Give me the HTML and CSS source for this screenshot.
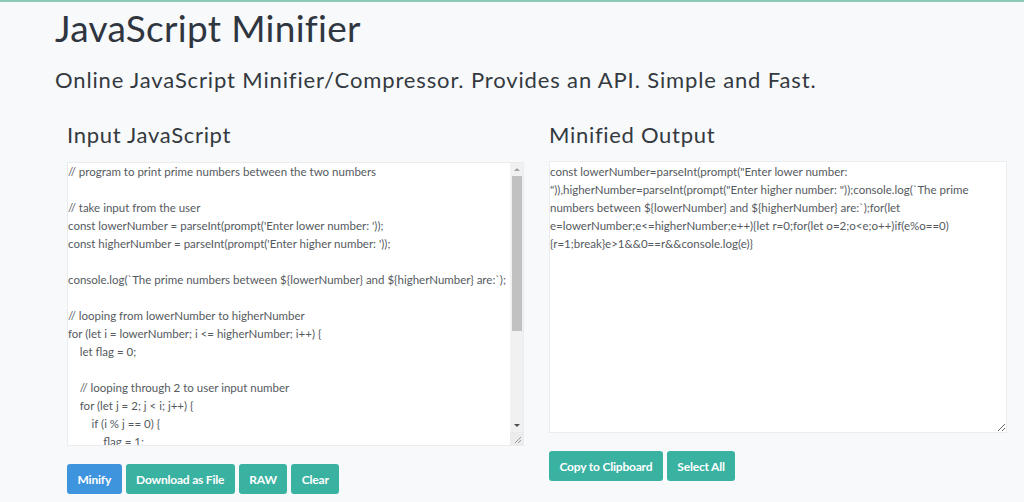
FILE: index.html
```html
<!DOCTYPE html>
<html lang="en">
<head>
<meta charset="utf-8">
<title>JavaScript Minifier</title>
<link rel="stylesheet" href="styles.css">
</head>
<body>
<div class="page">
  <h1 class="title">JavaScript Minifier</h1>
  <p class="subtitle">Online JavaScript Minifier/Compressor. Provides an API. Simple and Fast.</p>
  <div class="row">
    <div class="col col-input">
      <h2 class="col-title">Input JavaScript</h2>
      <div class="editor">
        <textarea class="code code-input" spellcheck="false">// program to print prime numbers between the two numbers

// take input from the user
const lowerNumber = parseInt(prompt('Enter lower number: '));
const higherNumber = parseInt(prompt('Enter higher number: '));

console.log(`The prime numbers between ${lowerNumber} and ${higherNumber} are:`);

// looping from lowerNumber to higherNumber
for (let i = lowerNumber; i &lt;= higherNumber; i++) {
    let flag = 0;

    // looping through 2 to user input number
    for (let j = 2; j &lt; i; j++) {
        if (i % j == 0) {
            flag = 1;
            break;
        }
    }

    if (i &gt; 1 &amp;&amp; flag == 0) {
        console.log(i);
    }
}</textarea>
        <div class="scrollbar" aria-hidden="true">
          <div class="sb-btn"><span class="arrow-up"></span></div>
          <div class="sb-track"><div class="sb-thumb"></div></div>
          <div class="sb-btn"><span class="arrow-down"></span></div>
          <div class="sb-corner">
            <svg width="13" height="13" viewBox="0 0 13 13"><path d="M11 5 L5 11 M11 8 L8 11" stroke="#9a9a9a" stroke-width="1" fill="none"/></svg>
          </div>
        </div>
      </div>
      <div class="actions">
        <button class="btn btn-blue">Minify</button>
        <button class="btn btn-teal">Download as File</button>
        <button class="btn btn-teal">RAW</button>
        <button class="btn btn-teal">Clear</button>
      </div>
    </div>
    <div class="col col-output">
      <h2 class="col-title">Minified Output</h2>
      <textarea class="code code-output" wrap="off" spellcheck="false">const lowerNumber=parseInt(prompt("Enter lower number: 
")),higherNumber=parseInt(prompt("Enter higher number: "));console.log(`The prime 
numbers between ${lowerNumber} and ${higherNumber} are:`);for(let 
e=lowerNumber;e&lt;=higherNumber;e++){let r=0;for(let o=2;o&lt;e;o++)if(e%o==0)
{r=1;break}e&gt;1&amp;&amp;0==r&amp;&amp;console.log(e)}</textarea>
      <div class="actions">
        <button class="btn btn-teal">Copy to Clipboard</button>
        <button class="btn btn-teal">Select All</button>
      </div>
    </div>
  </div>
</div>
</body>
</html>
```
FILE: styles.css
```css
html, body {
  margin: 0;
  padding: 0;
}
body {
  background: #f7f9fb;
  border-top: 2px solid #8cc8b6;
  color: #343a40;
  font-family: Lato, "Open Sans", sans-serif;
  height: 500px;
  overflow: hidden;
}
.page {
  padding: 4px 0 0 55px;
}
.title {
  margin: 0;
  font-size: 37px;
  font-weight: 400;
  line-height: 1.2;
  letter-spacing: 0.3px;
  color: #2f3640;
}
.subtitle {
  margin: 17px 0 0 0;
  font-size: 22px;
  line-height: 1.2;
  letter-spacing: 0.86px;
  color: #343a40;
}
.row {
  display: flex;
  gap: 25px;
  margin-top: 28px;
  padding-left: 12px;
}
.col-input { width: 457px; }
.col-output { width: 458px; }
.col-title {
  margin: 0;
  font-size: 22px;
  font-weight: 400;
  line-height: 1.2;
  letter-spacing: 0.7px;
  color: #343a40;
}
.editor {
  display: flex;
  box-sizing: border-box;
  height: 284px;
  margin-top: 14px;
  border: 1px solid #e9edf0;
  background: #ffffff;
}
.code {
  display: block;
  box-sizing: border-box;
  margin: 0;
  background: #ffffff;
  color: #555a60;
  font-family: Lato, "Open Sans", sans-serif;
  font-size: 11.5px;
  line-height: 18px;
  outline: none;
}
.code-input {
  flex: 1;
  min-width: 0;
  height: 100%;
  padding: 0;
  border: none;
  resize: none;
  overflow: hidden;
  white-space: pre;
}
.code-output {
  width: 100%;
  margin-top: 13px;
  height: 272px;
  padding: 1px 0 0 0;
  border: 1px solid #e9edf0;
  overflow: hidden;
}
.scrollbar {
  display: flex;
  flex-direction: column;
  width: 13px;
  background: #f1f1f1;
}
.sb-btn {
  height: 13px;
  display: flex;
  align-items: center;
  justify-content: center;
}
.arrow-up {
  width: 0;
  height: 0;
  border-left: 3px solid transparent;
  border-right: 3px solid transparent;
  border-bottom: 3px solid #a3a3a3;
}
.arrow-down {
  width: 0;
  height: 0;
  border-left: 3px solid transparent;
  border-right: 3px solid transparent;
  border-top: 3px solid #505050;
}
.sb-track {
  flex: 1;
  padding: 0 1px 0 2px;
}
.sb-thumb {
  height: 155px;
  background: #c1c1c1;
}
.sb-corner {
  height: 13px;
  background: #ececec;
}
.sb-corner svg {
  display: block;
}
.actions {
  display: flex;
  gap: 4px;
  margin-top: 18px;
}
.btn {
  height: 30px;
  padding: 0 10.5px;
  border: none;
  border-radius: 3px;
  color: #ffffff;
  font-family: Lato, "Open Sans", sans-serif;
  font-weight: 700;
  font-size: 12px;
  letter-spacing: -0.2px;
}
.btn-blue { background: #3f94de; }
.btn-teal { background: #3ab2a2; }
```
